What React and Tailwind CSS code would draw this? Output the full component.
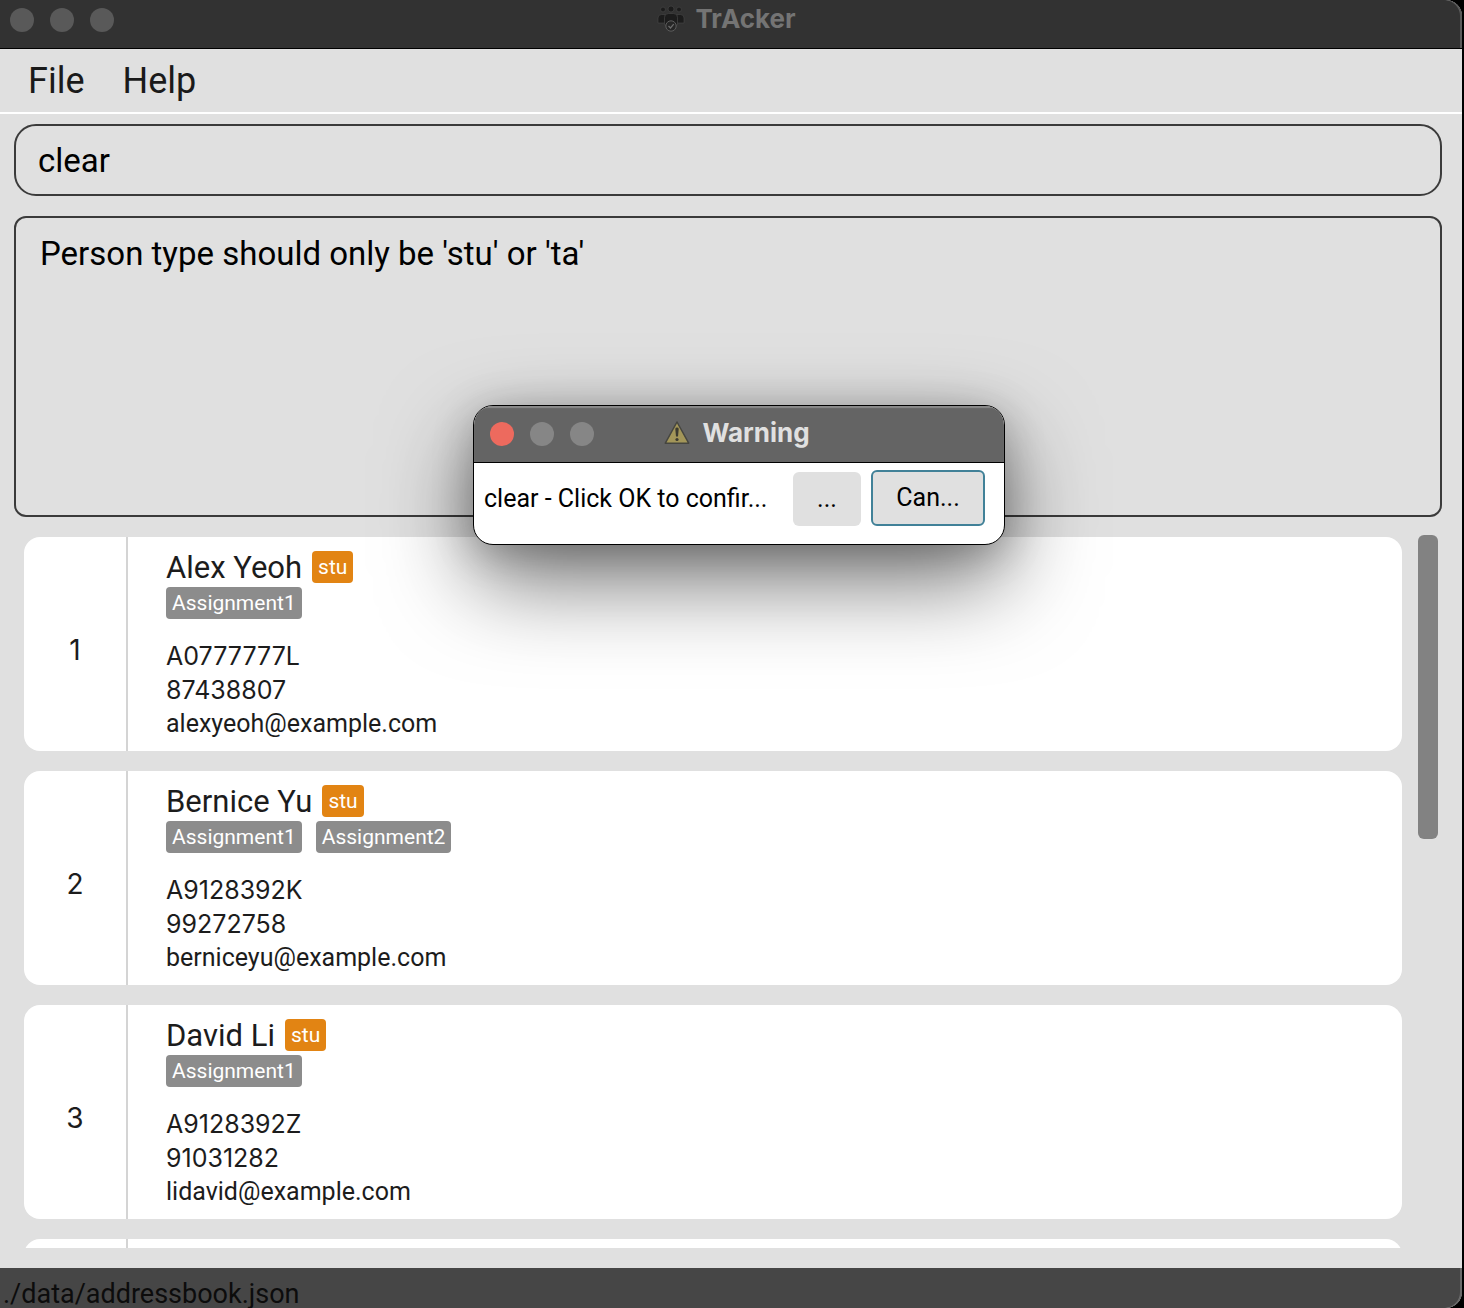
import React from "react";

const persons = [
  { name: "Alex Yeoh", type: "stu", tags: ["Assignment1"], id: "A0777777L", phone: "87438807", email: "alexyeoh@example.com" },
  { name: "Bernice Yu", type: "stu", tags: ["Assignment1", "Assignment2"], id: "A9128392K", phone: "99272758", email: "berniceyu@example.com" },
  { name: "David Li", type: "stu", tags: ["Assignment1"], id: "A9128392Z", phone: "91031282", email: "lidavid@example.com" },
];

function GroupIcon() {
  return (
    <svg viewBox="0 0 28 28" className="h-7 w-7" aria-hidden="true">
      <g fill="#1c1c1c" stroke="#484848" strokeWidth="0.6">
        <circle cx="6" cy="4.5" r="2.4" />
        <circle cx="22" cy="4.5" r="2.4" />
        <circle cx="14" cy="4" r="3" />
        <path d="M1 18v-5q0-3.500 3.500-3.500h3.500v8.500z" />
        <path d="M27 18v-5q0-3.500-3.500-3.500h-3.500v8.500z" />
        <path d="M7.500 20v-7.500q0-4 4-4h5q4 0 4 4v7.500z" />
      </g>
      <circle cx="14" cy="21" r="5.200" fill="#262626" stroke="#5c5c5c" strokeWidth="1" />
      <path d="M11.500 21l2 2 3.200-3.800" fill="none" stroke="#6c6c6c" strokeWidth="1.200" />
    </svg>
  );
}

function WarningIcon() {
  return (
    <svg viewBox="0 0 26 26" className="h-[26px] w-[26px]" aria-hidden="true">
      <path d="M13 2L24.700 23.200H1.300z" fill="#a39659" stroke="#464640" strokeWidth="1.500" strokeLinejoin="round" />
      <path d="M11.300 9q0-1.400 1.700-1.400t1.700 1.400l-.7 7.500h-2z" fill="#3c3a30" />
      <circle cx="13" cy="19.500" r="1.600" fill="#3c3a30" />
    </svg>
  );
}

function PersonCard({ index, person }) {
  return (
    <li className="flex h-[214px] shrink-0 rounded-2xl bg-white text-[#1c1c1c]">
      <div className="flex w-[104px] items-center justify-center border-r-2 border-[#d4d4d4] pt-3 font-[Inter,sans-serif] text-[28px]">{index}</div>
      <div className="flex flex-col pl-[38px] pt-3">
        <div className="flex h-[38px] items-start gap-2.5">
          <h2 className="text-[31px] leading-[38px]">{person.name}</h2>
          <span className="mt-0.5 h-8 rounded bg-[#e28413] px-1.5 text-[21px] leading-8 text-white">{person.type}</span>
        </div>
        <div className="flex gap-3.5">
          {person.tags.map((tag) => (
            <span key={tag} className="h-8 rounded bg-[#8c8c8c] px-1.5 text-[21px] leading-8 text-white">{tag}</span>
          ))}
        </div>
        <div className="mt-5 text-[25px] leading-[34px]">
          <p className="font-[Inter,sans-serif]">{person.id}</p>
          <p className="font-[Inter,sans-serif]">{person.phone}</p>
          <p>{person.email}</p>
        </div>
      </div>
    </li>
  );
}

export default function App() {
  return (
    <div className="relative h-screen overflow-hidden bg-black pr-0.5 font-[Roboto,'Liberation_Sans',sans-serif]">
      <div className="flex h-full flex-col overflow-hidden rounded-r-2xl bg-[#e0e0e0]">
        <header className="flex h-[49px] shrink-0 items-start rounded-tr-2xl border-b border-black bg-[#323232] pt-2 pr-[19px] pl-2.5 shadow-[inset_-2px_0_0_#5a5a5a]">
          <div className="flex flex-1 gap-4">
            <button aria-label="Close" className="h-6 w-6 rounded-full bg-[#595959]" />
            <button aria-label="Minimize" className="h-6 w-6 rounded-full bg-[#595959]" />
            <button aria-label="Zoom" className="h-6 w-6 rounded-full bg-[#595959]" />
          </div>
          <div className="-mt-1 flex items-center gap-2.5 font-[Inter,sans-serif]">
            <GroupIcon />
            <h1 className="text-[26px] leading-[30px] font-bold text-[#747474]">TrAcker</h1>
          </div>
          <div className="flex-1" />
        </header>

        <nav className="flex h-[65px] shrink-0 items-center gap-[38px] border-b-2 border-white pl-7 text-[36px] text-[#1a1a1a]">
          <button>File</button>
          <button>Help</button>
        </nav>

        <main className="flex min-h-0 flex-1 flex-col pt-2.5 pr-5 pb-5 pl-3.5">
          <input
            aria-label="Command"
            defaultValue="clear"
            className="h-[72px] w-full shrink-0 rounded-[22px] border-2 border-[#3b3b3b] bg-transparent px-[22px] text-[33px] text-black outline-none"
          />
          <textarea
            aria-label="Result"
            readOnly
            defaultValue="Person type should only be 'stu' or 'ta'"
            className="mt-5 h-[301px] w-full shrink-0 resize-none rounded-xl border-2 border-[#3b3b3b] bg-transparent px-6 py-3.5 text-[33px] leading-[43px] text-black outline-none"
          />
          <div className="mt-[18px] flex min-h-0 flex-1 justify-between gap-4 pr-1 pl-2.5">
            <ul className="flex flex-1 flex-col gap-5 overflow-hidden pt-0.5">
              {persons.map((person, i) => (
                <PersonCard key={person.id} index={i + 1} person={person} />
              ))}
              <li className="flex h-[214px] shrink-0 rounded-2xl bg-white">
                <div className="w-[104px] border-r-2 border-[#d4d4d4]" />
              </li>
            </ul>
            <div className="h-[304px] w-5 rounded-md bg-[#828282]" />
          </div>
        </main>

        <footer className="h-10 shrink-0 rounded-br-2xl bg-[#464646] pt-[11px] pl-[3px] text-[27px] leading-[30px] text-[#0c0c0c] shadow-[inset_-2px_0_0_#6a6a6a]">./data/addressbook.json</footer>
      </div>

      <section
        role="dialog"
        aria-label="Warning"
        className="absolute top-[405px] left-[473px] w-[532px] overflow-hidden rounded-[20px] border border-black bg-white shadow-[0_36px_90px_rgba(0,0,0,0.55),0_6px_40px_rgba(0,0,0,0.22)]"
      >
        <div className="flex h-[57px] items-center border-b border-black bg-[#646464] pr-1 pb-0.5 pl-4 shadow-[inset_0_2px_1px_#8a8a8a]">
          <div className="flex flex-1 gap-4 pt-0.5">
            <button aria-label="Close dialog" className="h-6 w-6 rounded-full bg-[#ed6a5e]" />
            <button aria-label="Minimize dialog" className="h-6 w-6 rounded-full bg-[#868686]" />
            <button aria-label="Zoom dialog" className="h-6 w-6 rounded-full bg-[#868686]" />
          </div>
          <div className="flex items-center gap-3 font-[Inter,sans-serif]">
            <WarningIcon />
            <h2 className="text-[26px] leading-[30px] font-bold text-[#e0e0e0]">Warning</h2>
          </div>
          <div className="flex-1 pr-4" />
        </div>
        <div className="flex h-[81px] items-start pt-[7px] pr-[19px] pl-2.5 text-[25px] text-black">
          <p className="flex-1 leading-[58px] whitespace-nowrap">clear - Click OK to confir...</p>
          <button className="mt-0.5 mr-2.5 h-[54px] w-[68px] shrink-0 rounded-md bg-[#e0e0e0]">...</button>
          <button className="h-14 w-[114px] shrink-0 rounded-md border-2 border-[#418198] bg-[#e0e0e0]">Can...</button>
        </div>
      </section>
    </div>
  );
}
